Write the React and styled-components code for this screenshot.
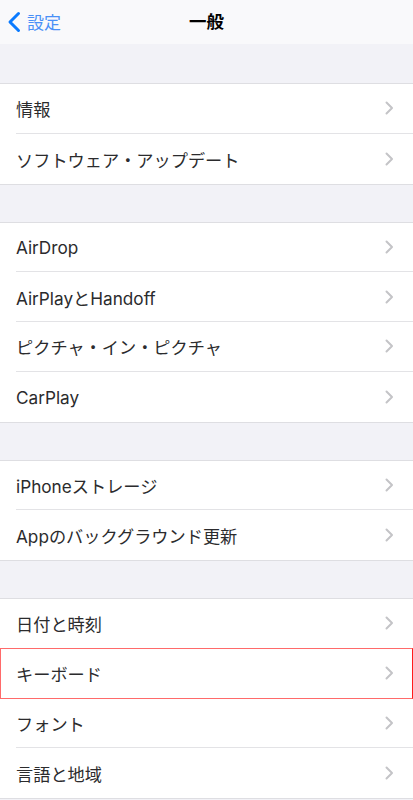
import React from "react"
import styled, { createGlobalStyle } from "styled-components"

const sections = [
  ["情報", "ソフトウェア・アップデート"],
  ["AirDrop", "AirPlayとHandoff", "ピクチャ・イン・ピクチャ", "CarPlay"],
  ["iPhoneストレージ", "Appのバックグラウンド更新"],
  ["日付と時刻", "キーボード", "フォント", "言語と地域"],
]

const App = () => {
  return (
    <>
      <GlobalStyle />
      <Screen>
        <NavBar>
          <BackButton>
            <svg width="14" height="22" viewBox="0 0 14 22" fill="none">
              <path
                d="M11.5 2.5 L3 11 L11.5 19.5"
                stroke="#0a7aff"
                strokeWidth="3"
                strokeLinecap="round"
                strokeLinejoin="round"
              />
            </svg>
            <span>設定</span>
          </BackButton>
          <Title>一般</Title>
        </NavBar>
        {sections.map((items, sIdx) => (
          <React.Fragment key={sIdx}>
            <Gap first={sIdx === 0} />
            <Group>
              {items.map((label, idx) => (
                <Row key={label} highlighted={label === "キーボード"}>
                  <RowInner last={idx === items.length - 1}>
                    <Label>{label}</Label>
                    <svg width="9" height="14" viewBox="0 0 9 14" fill="none">
                      <path
                        d="M1.5 1.5 L7 7 L1.5 12.5"
                        stroke="#c4c4c7"
                        strokeWidth="2"
                        strokeLinecap="round"
                        strokeLinejoin="round"
                      />
                    </svg>
                  </RowInner>
                </Row>
              ))}
            </Group>
          </React.Fragment>
        ))}
      </Screen>
    </>
  )
}

export default App

const GlobalStyle = createGlobalStyle`
  body {
    margin: 0;
    background: #f2f2f7;
    font-family: "Inter", "Noto Sans CJK JP", sans-serif;
  }
`

const Screen = styled.div`
  width: 413px;
  height: 800px;
  overflow: hidden;
  background: #f2f2f7;
`

const NavBar = styled.header`
  height: 44px;
  background: #f9f9fb;
  display: flex;
  align-items: center;
  justify-content: center;
  position: relative;
`

const BackButton = styled.div`
  position: absolute;
  left: 7px;
  top: 0;
  height: 44px;
  display: flex;
  align-items: center;
  gap: 6px;
  color: #4a90f7;
  font-size: 17px;
  span {
    font-family: "Noto Sans CJK JP", sans-serif;
    padding-bottom: 1px;
  }
`

const Title = styled.h1`
  margin: 0 0 4px;
  font-size: 17.5px;
  font-weight: 600;
  color: #000;
  font-family: "Noto Sans CJK JP", sans-serif;
`

const Gap = styled.div`
  height: ${({ first }) => (first ? "40px" : "39px")};
`

const Group = styled.div`
  background: #fff;
  border-top: 1px solid #dedee2;
  border-bottom: 1px solid #dedee2;
  margin-top: -1px;
  margin-bottom: -1px;
  position: relative;
`

const Row = styled.div`
  height: 49.75px;
  padding-left: 16px;
  position: relative;
  box-sizing: border-box;

  &::after {
    content: "";
    display: ${({ highlighted }) => (highlighted ? "block" : "none")};
    position: absolute;
    inset: -0.5px 0 -0.5px 0;
    border: 1px solid #ff6a6a;
    border-right-color: #ff1a1a;
    pointer-events: none;
  }
`

const RowInner = styled.div`
  height: 100%;
  display: flex;
  align-items: center;
  justify-content: space-between;
  padding-right: 19px;
  box-sizing: border-box;
  border-bottom: ${({ last }) => (last ? "none" : "1px solid #e3e3e6")};
`

const Label = styled.span`
  font-size: 17.2px;
  color: #2b2b2d;
  padding-top: 1px;
`
